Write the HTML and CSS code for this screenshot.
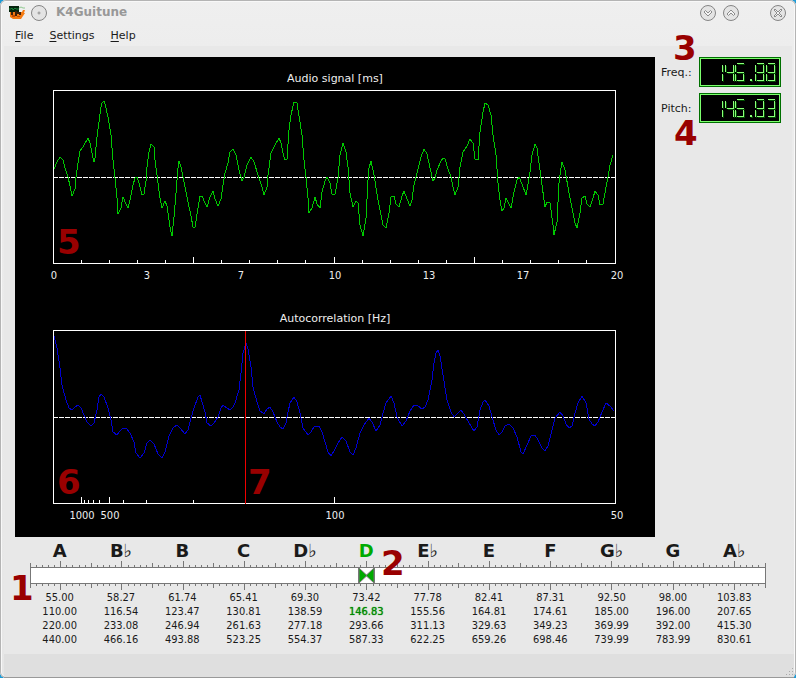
FILE: index.html
```
<!DOCTYPE html>
<html lang="en">

<head>
  <meta charset="UTF-8">
  <meta name="viewport" content="width=device-width, initial-scale=1.0">
  <title>K4Guitune</title>
  <link rel="stylesheet" href="styles.css">
</head>

<body>
  <div class="window">
    <header class="titlebar">
      <svg class="app-icon" width="16" height="14" viewBox="0 0 16 14">
        <path d="M1 6h12l1-2h2l-1 3h1l-2 3-2 3H4L1 11z" fill="#f47a12" />
        <path d="M3 9h3v2H3zM8 10h3v1H8z" fill="#c74a00" />
        <rect width="10" height="6" fill="#05230d" />
        <path d="M0 3h2l1-1 1 2 2-2 1 1h3" fill="none" stroke="#16853a" />
        <path d="M3 6v3M7 5v5M8 7h3v2" fill="none" stroke="#40200a" stroke-width="2" />
        <path d="M10 2l2 -1 2 1h2" fill="none" stroke="#8fc98f" />
      </svg>
      <button class="round" aria-label="Window menu">
        <svg width="18" height="18" viewBox="0 0 18 18">
          <circle cx="9" cy="9" r="7.5" />
          <circle class="mark" cx="9" cy="9" r="1" />
        </svg>
      </button>
      <h1>K4Guitune</h1>
      <button class="round" aria-label="Minimize">
        <svg width="18" height="18" viewBox="0 0 18 18">
          <circle cx="9" cy="9" r="7.5" />
          <path class="mark" d="M5 8l1.500-1.500L9 9l2.500-2.500L13 8l-4 4z" />
        </svg>
      </button>
      <button class="round" aria-label="Maximize">
        <svg width="18" height="18" viewBox="0 0 18 18">
          <circle cx="9" cy="9" r="7.5" />
          <path class="mark" d="M5 10l1.500 1.500L9 9l2.500 2.500L13 10 9 6z" />
        </svg>
      </button>
      <button class="round close" aria-label="Close">
        <svg width="18" height="18" viewBox="0 0 18 18">
          <circle cx="9" cy="9" r="7.5" />
          <path class="mark" d="M5 6l1-1 3 3 3-3 1 1-3 3 3 3-1 1-3-3-3 3-1-1 3-3z" />
        </svg>
      </button>
    </header>

    <nav class="menubar">
      <button><u>F</u>ile</button>
      <button><u>S</u>ettings</button>
      <button><u>H</u>elp</button>
    </nav>

    <main class="panel">
      <div class="top">
        <div class="scopes">
          <svg class="plot" viewBox="0 0 640 240">
            <text x="320" y="25">Audio signal [ms]</text>
            <path class="zero" d="M38 120.500H600" />
            <polyline class="audio" id="audio" />
            <path class="frame" id="audio-ticks" />
            <rect class="frame" x="38.500" y="33.500" width="562" height="173" />
            <g class="scale">
              <text x="39" y="222">0</text>
              <text x="132" y="222">3</text>
              <text x="226" y="222">7</text>
              <text x="320" y="222">10</text>
              <text x="414" y="222">13</text>
              <text x="508" y="222">17</text>
              <text x="602" y="222">20</text>
            </g>
          </svg>
          <svg class="plot" viewBox="0 0 640 240">
            <text x="320" y="25">Autocorrelation [Hz]</text>
            <path class="zero" d="M38 120.500H600" />
            <polyline class="correlation" id="correlation" />
            <path class="frame" id="correlation-ticks" />
            <rect class="frame" x="38.500" y="33.500" width="562" height="173" />
            <path class="peak" d="M230.500 34V207" />
            <g class="scale">
              <text x="67" y="222">1000</text>
              <text x="95" y="222">500</text>
              <text x="320" y="222">100</text>
              <text x="602" y="222">50</text>
            </g>
          </svg>
          <b class="callout c5">5</b>
          <b class="callout c6">6</b>
          <b class="callout c7">7</b>
        </div>

        <aside class="readouts">
          <span>Freq.:</span>
          <svg class="lcd" data-value="146.88" role="img" aria-label="146.88" viewBox="0 0 78 26"></svg>
          <span>Pitch:</span>
          <svg class="lcd" data-value="146.83" role="img" aria-label="146.83" viewBox="0 0 78 26"></svg>
          <b class="callout c3">3</b>
          <b class="callout c4">4</b>
        </aside>
      </div>

      <div class="tuner">
        <table>
          <thead>
            <tr>
              <th>A</th>
              <th>B<i>♭</i></th>
              <th>B</th>
              <th>C</th>
              <th>D<i>♭</i></th>
              <th class="active">D</th>
              <th>E<i>♭</i></th>
              <th>E</th>
              <th>F</th>
              <th>G<i>♭</i></th>
              <th>G</th>
              <th>A<i>♭</i></th>
            </tr>
          </thead>
          <tbody id="notes">
            <tr>
              <td class="ruler-cell" colspan="12">
                <svg class="ruler" viewBox="0 0 736 30">
                  <rect x="0.500" y="6.500" width="735" height="16" fill="#fff" />
                  <path id="ruler-ticks" />
                  <path class="needle" d="M329 7v15l8-7.500zM344 7v15l-8-7.500z" />
                  <path d="M328.500 7v15M344.500 7v15" />
                </svg>
              </td>
            </tr>
          </tbody>
        </table>
        <b class="callout c1">1</b>
        <b class="callout c2">2</b>
      </div>
    </main>

    <footer class="statusbar">
      <svg width="8" height="8" viewBox="0 0 8 8" fill="#aaa">
        <path d="M6 0h1v1H6zM3 3h1v1H3zM6 3h1v1H6zM0 6h1v1H0zM3 6h1v1H3zM6 6h1v1H6z" />
      </svg>
    </footer>
  </div>

  <script>
    const audio = '39,112 42,105 45,100 48,103 50,111 53,120 55,129 57,139 60,132 61,120 63,106 65,94 68,90 73,81 75,86 77,96 79,105 80,101 82,80 84,65 86,50 87,46 89,44 90,47 93,60 96,78 98,103 100,121 102,141 103,157 106,151 108,140 111,147 113,151 115,143 118,128 120,121 122,120 124,126 127,138 129,137 131,124 132,110 134,95 136,87 139,90 140,103 143,126 145,141 147,151 150,144 152,149 155,170 157,179 159,160 161,136 163,111 164,104 166,110 169,125 173,145 176,159 178,170 180,170 183,151 185,139 187,139 190,146 192,150 195,140 198,134 200,142 203,149 206,142 208,128 210,116 213,106 215,95 218,92 221,98 224,113 227,124 229,120 232,108 236,100 239,105 244,121 247,130 249,138 252,130 253,118 256,96 259,90 264,81 266,86 268,96 270,103 272,102 274,73 276,58 278,49 279,45 282,46 284,59 287,78 289,103 291,120 293,141 294,156 297,151 300,140 302,147 305,151 307,135 310,124 312,120 315,126 317,137 320,137 323,121 325,98 328,86 331,95 333,110 335,136 338,150 341,144 343,146 345,168 348,179 351,161 353,123 354,111 356,104 359,118 363,143 366,158 368,168 371,171 374,156 376,140 379,139 381,147 384,150 387,139 389,134 392,142 395,149 397,143 399,128 402,116 406,100 409,92 412,97 415,111 418,124 420,121 422,113 426,104 428,101 430,102 433,112 436,120 438,130 440,138 443,130 445,110 448,95 452,89 455,82 458,86 460,102 463,103 465,75 468,55 470,46 473,48 476,58 478,78 481,98 483,126 485,143 487,154 489,151 491,141 494,147 496,151 499,135 502,123 504,120 507,127 511,138 512,133 515,115 517,98 520,87 522,91 524,106 527,128 530,150 532,145 535,146 538,168 539,178 542,165 544,126 546,111 547,105 550,113 554,136 558,156 560,166 562,171 565,156 567,141 570,139 572,147 575,150 578,141 580,134 583,138 585,148 588,147 591,130 593,120 595,108 598,98';

    const correlation = '39,39 42,51 45,71 47,88 51,103 54,111 57,113 60,110 63,108 66,111 69,118 72,125 76,129 79,126 82,113 84,100 86,97 89,100 93,111 96,123 98,135 102,138 105,134 108,131 111,131 115,136 119,145 121,156 125,161 129,156 132,146 135,143 139,147 143,157 147,161 150,155 154,139 158,131 162,128 165,131 170,137 173,133 176,121 179,111 183,100 185,98 187,105 190,115 192,126 196,129 199,126 203,120 206,111 208,108 212,111 215,113 218,110 220,106 224,93 226,76 228,56 231,46 233,52 236,70 238,90 242,105 245,114 249,117 252,112 255,110 258,115 262,125 265,130 268,132 271,126 273,115 275,106 279,100 282,105 285,116 288,131 293,138 296,135 299,130 304,129 307,135 310,145 313,155 316,159 319,154 323,146 327,140 331,144 335,155 338,158 341,151 345,136 349,128 354,121 357,125 361,134 365,128 368,116 371,106 376,99 379,106 382,120 387,129 391,124 395,114 399,108 403,109 407,112 410,110 413,103 417,83 419,66 421,56 423,53 425,59 428,78 432,103 436,115 439,120 442,117 446,113 449,117 454,126 459,134 462,130 465,113 468,105 470,103 474,109 477,120 481,133 484,138 487,135 490,129 494,127 498,131 502,140 506,155 508,157 512,148 516,139 520,138 523,143 527,151 530,154 533,149 537,133 540,121 545,115 548,119 551,127 554,131 557,129 560,116 563,106 567,99 571,106 574,122 577,127 580,129 583,125 587,115 591,106 595,109 599,114';

    document.getElementById('audio').setAttribute('points', audio);
    document.getElementById('correlation').setAttribute('points', correlation);

    // one tick per ms, longer every 5 ms
    let ticks = '';
    for (let i = 1; i < 20; i++) {
      ticks += `M${Math.floor(38 + i * 28.1) + 0.5} 207v${i % 5 === 0 ? -7 : -4}`;
    }
    document.getElementById('audio-ticks').setAttribute('d', ticks);

    // frequency scale, [x, height]
    const marks = [[66, 7], [69, 4], [73, 4], [78, 4], [84, 4], [94, 7], [108, 4], [131, 4], [178, 4], [319, 7]];
    document.getElementById('correlation-ticks').setAttribute('d',
      marks.map(([x, h]) => `M${x + 0.5} 207v-${h}`).join(''));

    // ten ticks per semitone, the longest one under the note name
    ticks = '';
    for (let i = 0; i <= 120; i++) {
      const x = Math.floor(i * 735 / 120) + 0.5;
      const h = i % 10 === 5 ? 6 : i % 10 === 0 ? 4 : 2;
      ticks += `M${x} 6v-${h}M${x} 23v${h}`;
    }
    // closed ends of the scale
    ticks += 'M0.5 6v17M735.5 6v17';
    document.getElementById('ruler-ticks').setAttribute('d', ticks);

    const octaves = [
      ['55.00', '58.27', '61.74', '65.41', '69.30', '73.42', '77.78', '82.41', '87.31', '92.50', '98.00', '103.83'],
      ['110.00', '116.54', '123.47', '130.81', '138.59', '146.83', '155.56', '164.81', '174.61', '185.00', '196.00', '207.65'],
      ['220.00', '233.08', '246.94', '261.63', '277.18', '293.66', '311.13', '329.63', '349.23', '369.99', '392.00', '415.30'],
      ['440.00', '466.16', '493.88', '523.25', '554.37', '587.33', '622.25', '659.26', '698.46', '739.99', '783.99', '830.61']
    ];
    octaves.forEach(octave => {
      const row = document.createElement('tr');
      octave.forEach(freq => {
        const cell = document.createElement('td');
        cell.textContent = freq;
        if (freq === '146.83') {
          cell.classList.add('active');
        }
        row.appendChild(cell);
      });
      document.getElementById('notes').appendChild(row);
    });

    // seven segment display
    const segments = {
      a: 'M1 0h7', b: 'M8 1v7', c: 'M8 10v7', d: 'M1 17h7',
      e: 'M0 10v7', f: 'M0 1v7', g: 'M1 9h7'
    };
    const digits = { 1: 'bc', 3: 'abcdg', 4: 'bcfg', 6: 'acdefg', 8: 'abcdefg' };
    document.querySelectorAll('.lcd').forEach(lcd => {
      let shade = '';
      let light = '';
      [...lcd.dataset.value].forEach((char, i) => {
        const x = [13, 24, 34, 44, 54, 65][i] + 0.5;
        const d = char === '.' ? 'M4 16h2M4 17h2' : [...digits[char]].map(s => segments[s]).join('');
        shade += `<path class="shade" d="${d}" transform="translate(${x + 1} 5.500)"/>`;
        light += `<path d="${d}" transform="translate(${x} 4.500)"/>`;
      });
      lcd.innerHTML = shade + light;
    });
  </script>
</body>

</html>
```
FILE: styles.css
```
* {
  box-sizing: border-box;
}

body {
  margin: 0;
  background-color: #1d9ad6;
  font-family: "DejaVu Sans", sans-serif;
  font-size: 11px;
  color: #1a1a1a;
}

button {
  padding: 0;
  border: none;
  background: transparent;
  font: inherit;
  color: inherit;
}

svg {
  display: block;
}

.window {
  display: flex;
  flex-direction: column;
  min-height: 100vh;
  padding: 0 4px;
  border-radius: 6px;
  background: linear-gradient(#efefef, #ededed 46px, #e6e6e6);
  box-shadow: inset 0 0 0 1px #b4b4b4, inset 0 0 0 2px #f8f8f8;
}

.titlebar {
  display: flex;
  align-items: center;
  height: 25px;
  padding: 0 5px;
}

.titlebar h1 {
  flex: 1;
  margin: 0 0 0 8px;
  font-size: 12px;
  line-height: 25px;
  color: #989898;
}

.round {
  margin-right: 5px;
}

.app-icon + .round {
  margin: 0 0 0 5px;
}

.round.close {
  margin: 0 0 0 24px;
}

.round circle {
  fill: #e4e4e4;
  stroke: #858585;
}

.round .mark {
  fill: #f4f4f4;
  stroke: #8c8c8c;
}

.menubar {
  display: flex;
  height: 21px;
  padding-left: 3px;
}

.menubar button {
  padding: 0 8px;
  line-height: 21px;
}

.menubar u {
  text-underline-offset: 2px;
}

.panel {
  flex: 1;
  padding: 11px 11px 7px;
  background-color: #e8e8e8;
}

.top {
  display: grid;
  grid-template-columns: 1fr 120px;
  gap: 6px;
}

.scopes {
  position: relative;
  background-color: #000;
}

.plot {
  width: 100%;
}

.plot text {
  fill: #eee;
  text-anchor: middle;
}

.plot .scale text {
  font-family: "DejaVu Sans Condensed", "DejaVu Sans", sans-serif;
  font-stretch: condensed;
}

.plot path,
.plot polyline,
.plot rect {
  fill: none;
  shape-rendering: crispEdges;
}

.frame,
.zero {
  stroke: #fff;
}

.zero {
  stroke-dasharray: 5 1;
}

.audio {
  stroke: #00c800;
}

.correlation {
  stroke: #0000d0;
}

.peak {
  stroke: #f00000;
}

.readouts {
  position: relative;
  display: grid;
  grid-template-columns: 1fr 82px;
  grid-auto-rows: 30px;
  gap: 6px;
  align-content: start;
  align-items: center;
}

.lcd {
  width: 82px;
  height: 30px;
  border: 1px solid #007000;
  outline: 1px solid #7dff6e;
  outline-offset: -2px;
  background-color: #000;
  padding: 1px;
}

.lcd path {
  fill: none;
  stroke: #8cff7a;
  shape-rendering: crispEdges;
}

.lcd .shade {
  stroke: #004c00;
}

.tuner {
  position: relative;
  padding: 0 15px;
}

table {
  width: 100%;
  table-layout: fixed;
  border-collapse: collapse;
}

th {
  padding: 4px 2px 0 0;
  font-size: 18px;
  line-height: 20px;
}

th i {
  font-style: normal;
  font-weight: normal;
}

td {
  padding: 0 2px 0 0;
  font-family: "DejaVu Sans Condensed", "DejaVu Sans", sans-serif;
  font-stretch: condensed;
  line-height: 14px;
  text-align: center;
}

.ruler-cell {
  padding: 0;
}

th.active {
  color: #00aa00;
}

td.active {
  color: #008a00;
  text-shadow: 0 0 1px #008a00;
}

.ruler {
  width: 100%;
}

.ruler path,
.ruler rect {
  stroke: #777;
  shape-rendering: crispEdges;
}

.ruler .needle {
  fill: #00aa00;
  stroke: #777;
  shape-rendering: auto;
}

.statusbar {
  display: flex;
  align-items: flex-end;
  justify-content: flex-end;
  height: 24px;
  margin: 0 -2px 0 0;
  padding-bottom: 1px;
  border-bottom: 1px solid #999;
  background-color: #dfdfdf;
}

/* numbered callouts lying over the window */
.callout {
  position: absolute;
  font-size: 34px;
  line-height: 34px;
  color: #990000;
}

.c1 {
  left: -5px;
  top: 34px;
}

.c2 {
  left: 366px;
  top: 9px;
}

.c3 {
  left: 12px;
  top: -26px;
}

.c4 {
  left: 13px;
  top: 59px;
}

.c5 {
  left: 42px;
  top: 168px;
}

.c6 {
  left: 42px;
  top: 408px;
}

.c7 {
  left: 233px;
  top: 408px;
}
```
